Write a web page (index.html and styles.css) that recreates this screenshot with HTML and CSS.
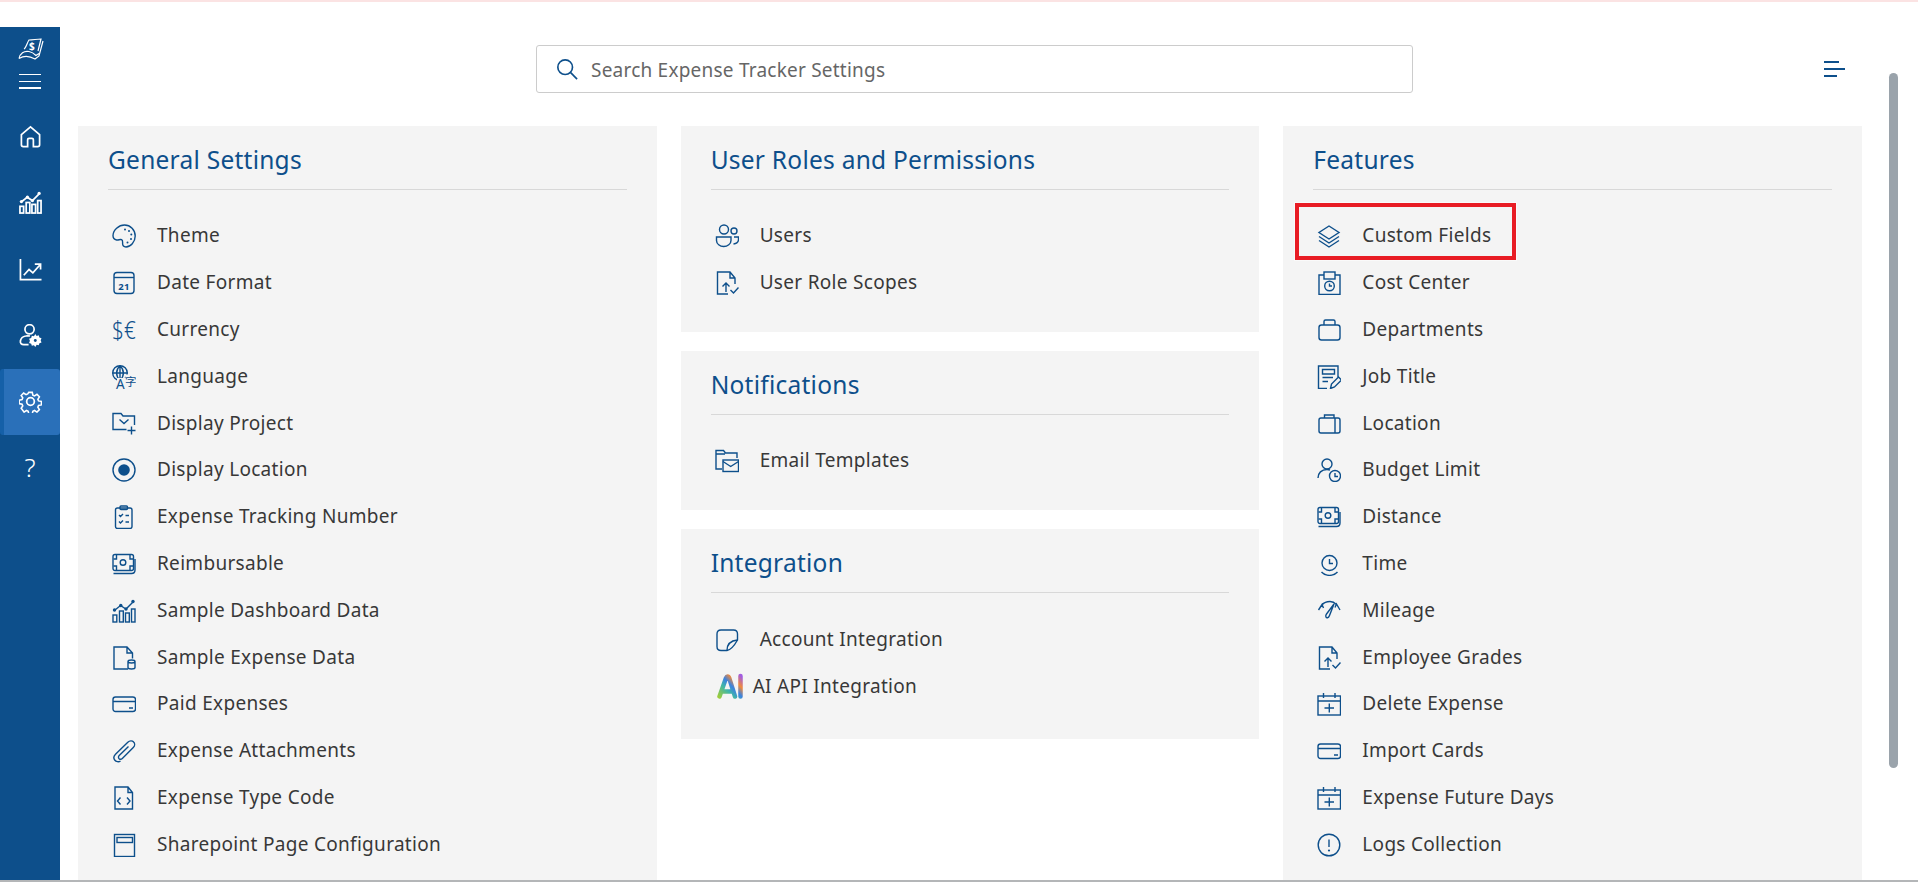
FILE: index.html
```html
<!DOCTYPE html>
<html lang="en">
<head>
<meta charset="utf-8">
<title>Expense Tracker Settings</title>
<link rel="stylesheet" href="styles.css">
</head>
<body>
<svg class="sprite" aria-hidden="true">
  <defs>
    <symbol id="i-palette" viewBox="0 0 24 24"><path d="M12.500 1C18.500 1 23.200 5.800 23.200 12S18.500 23 14 23c-2.400 0-3.400-1.500-3.400-3.400 0-1.600.4-3.100-1-3.900-1.500-.9-3 .7-5 .3C2.400 15.600 1 13.800 1 11.500 1 6 6.800 1 12.500 1z"/><g class="dot"><circle cx="13" cy="5.500" r="1"/><circle cx="17" cy="7" r="1"/><circle cx="19.300" cy="10.500" r="1"/><circle cx="19" cy="15" r="1"/><circle cx="15.500" cy="18.500" r="1"/></g></symbol>
    <symbol id="i-date" viewBox="0 0 24 24"><rect x="2" y="1.500" width="20" height="21" rx="3"/><path d="M2 6.500h20"/><text class="tx" x="12" y="18.500" font-size="9.500" font-weight="700" text-anchor="middle">21</text></symbol>
    <symbol id="i-currency" viewBox="0 0 24 24"><text class="tx thin" x="0" y="21" font-size="26" textLength="24" lengthAdjust="spacingAndGlyphs">$€</text></symbol>
    <symbol id="i-language" viewBox="0 0 24 24"><circle cx="8" cy="8" r="7.300"/><path d="M.7 8h14.600M8 .7v14.600M8 .7c-4.500 4-4.500 10.600 0 14.600M8 .7c4.500 4 4.500 10.600 0 14.600"/><rect class="mask" x="5" y="13" width="19" height="12"/><rect class="mask" x="13.500" y="9.500" width="11" height="5"/><text class="tx" x="4" y="24" font-size="13.500">A</text><text class="tx cjk" x="13" y="21" font-size="11.500">字</text></symbol>
    <symbol id="i-folder" viewBox="0 0 24 24"><path d="M14.500 17.500H1V1.500h8l2 2.500h11.500v9"/><path d="M7.500 7.500l4.500 4 4.500-4M19.500 14.500v8M15.500 18.500h8"/></symbol>
    <symbol id="i-radio" viewBox="0 0 24 24"><circle cx="12" cy="12" r="11"/><circle class="solid" cx="12" cy="12" r="5.800"/></symbol>
    <symbol id="i-clipboard" viewBox="0 0 24 24"><rect x="3.500" y="3" width="16.500" height="20.500" rx="2"/><rect x="8" y="1" width="7.500" height="3.500" rx="1"/><path d="M7 10l1.500 1.500L11 9M13.500 10.500H17M7 16.500l1.500 1.500 2.500-2.500M13.500 17H17"/></symbol>
    <symbol id="i-money" viewBox="0 0 24 24"><rect x="1" y="2.500" width="20.500" height="16" rx="2"/><circle cx="11" cy="10.500" r="2.800"/><path d="M1.500 21.500h18c2 0 3.500-1.500 3.500-3.500V7"/><path d="M1.500 7h3V3M18 3v4h3M1.500 14h3v4M18 18v-4h3"/></symbol>
    <symbol id="i-chart" viewBox="0 0 24 24"><rect class="bar" x="1" y="16" width="3.800" height="7"/><rect class="bar" x="7.500" y="12" width="3.800" height="11"/><rect class="bar" x="13.500" y="14" width="3.800" height="9"/><rect class="bar" x="19.500" y="10" width="3.500" height="13"/><path d="M3 11l5.500-4.500 5.500 3.500 6.500-6.500"/><g class="dot"><circle cx="2.500" cy="11" r="1.700"/><circle cx="8.800" cy="6.500" r="1.700"/><circle cx="14" cy="10" r="1.700"/><circle cx="21" cy="2.500" r="1.700"/></g></symbol>
    <symbol id="i-docdb" viewBox="0 0 24 24"><path d="M16 23H2V1h13l5.500 6v5.500M15 1v6h5.500"/><path d="M16 15.500v6c0 2 7 2 7 0v-6c0-2-7-2-7 0zM16 15.500c0 2 7 2 7 0"/></symbol>
    <symbol id="i-card" viewBox="0 0 24 24"><rect x="1" y="5" width="22.500" height="14.500" rx="2.500"/><path d="M1 9.500h22.500M17 16h4"/></symbol>
    <symbol id="i-clip" viewBox="0 0 24 24"><path d="M8.500 22c-1.800 1.300-4.500.8-5.800-1-1.300-1.800-.8-4.200.8-5.800L15.800 3.300c1.800-1.800 4.500-1.800 5.800-.3 1.500 1.500 1.300 4-.3 5.600L10.300 19.500c-.9.900-2.300 1-3.200.2-.9-.9-.8-2.400.1-3.300l9.300-9"/></symbol>
    <symbol id="i-doccode" viewBox="0 0 24 24"><path d="M3 23V1h13l4.500 5.500V23zM16 1v5.500h4.500"/><path d="M8.500 11.500L5.500 15l3 3.500M15 11.500l3 3.500-3 3.500"/></symbol>
    <symbol id="i-page" viewBox="0 0 24 24"><rect x="2.500" y="1.500" width="20" height="22"/><rect x="5" y="4.500" width="15.500" height="5"/></symbol>
    <symbol id="i-users" viewBox="0 0 24 24"><circle cx="9" cy="5.500" r="4.500"/><circle cx="19" cy="7" r="3"/><path d="M1.500 13h14.500v3.500c0 3.500-3.500 6-7.300 6s-7.200-2.500-7.200-6z"/><path d="M19 13h4.500v2.500c0 2.500-2 4-5 4.500"/></symbol>
    <symbol id="i-docup" viewBox="0 0 24 24"><path d="M13 23H2.500V1h12.500l5 6v6M15 1v6h5"/><path d="M11 21v-8.500M7.500 15.500l3.500-3.500 3.500 3.500M15.500 19l3 3 5-5.500"/></symbol>
    <symbol id="i-mailfolder" viewBox="0 0 24 24"><path d="M7 20H1V1.500h7.500l2 2.500H22v5M1 5h9"/><rect x="8" y="11" width="15.500" height="11.500"/><path d="M8 12.500l7.700 5 7.800-5"/></symbol>
    <symbol id="i-note" viewBox="0 0 24 24"><path d="M12 22.500H6c-2.500 0-4-1.500-4-4V6c0-2.500 1.500-4 4-4h12.500c2.500 0 4 1.500 4 4v6C18 20 15 22 12 22.500z"/><path d="M12 22.500c0-6 3-9.800 10.500-10.500"/></symbol>
    <symbol id="i-layers" viewBox="0 0 24 24"><path d="M12 2L2 8.500 12 15l10-6.500zM2 12.500L12 19l10-6.500M2 16.500L12 23l10-6.500"/></symbol>
    <symbol id="i-cost" viewBox="0 0 24 24"><path d="M7 4H2v19.500h21V4h-5"/><rect x="7" y="1" width="11" height="7"/><circle cx="12.500" cy="15" r="4.800"/><path d="M12.500 12.500V15h2.500"/></symbol>
    <symbol id="i-case" viewBox="0 0 24 24"><rect x="2" y="7" width="21" height="15" rx="2.500"/><path d="M7 7V3.500C7 2.500 7.500 2 8.500 2h8c1 0 1.500.5 1.500 1.500V7"/></symbol>
    <symbol id="i-job" viewBox="0 0 24 24"><path d="M10 23.500H1.500V1H21v11"/><path d="M5.500 4.500h12v4.500h-12zM5.500 12.500H16M5.500 16.500H11"/><path d="M13.500 23.500l1-4.500 7-7 3 3-7 7z"/></symbol>
    <symbol id="i-luggage" viewBox="0 0 24 24"><rect x="2" y="6" width="21" height="15" rx="2"/><path d="M7.500 6V3h9.500v3M18 6v15"/></symbol>
    <symbol id="i-budget" viewBox="0 0 24 24"><circle cx="10" cy="6" r="5"/><path d="M1 20c0-5 3.500-8.500 9-8.500 1 0 2 .1 3 .5"/><circle cx="18" cy="18" r="5.500"/><path d="M18 15v3.500h3"/></symbol>
    <symbol id="i-time" viewBox="0 0 24 24"><circle cx="12.500" cy="11" r="7.500"/><path d="M12.500 7v4.500H16M4.500 20c4 4.500 12 4.500 16 0"/></symbol>
    <symbol id="i-mileage" viewBox="0 0 24 24"><path d="M1.500 11L5 5.500l1.500 3.500M23 11l-3.500-6-1.500 3.500M5 6c2-2.500 5-3.500 8-3.500 2.500 0 4.500 1 6.500 3"/><path d="M17 5L9.500 15c-1.500 2-.5 4 1 3.800 1-.2 1.500-1 2-2.300z"/></symbol>
    <symbol id="i-calplus" viewBox="0 0 24 24"><rect x="1" y="4" width="22.500" height="19"/><path d="M1 9h22.500M6.500 1v5M18 1v5M12.300 11.500v9M7.500 16h9.500"/></symbol>
    <symbol id="i-info" viewBox="0 0 24 24"><circle cx="12" cy="12" r="10.800"/><path d="M12 6.500V14"/><circle class="solid" cx="12" cy="17.500" r="1.100"/></symbol>
    <symbol id="i-home" viewBox="0 0 24 24"><path d="M2.500 10L12 2l9.500 8v10.500c0 1.200-.8 2-2 2H15v-7c0-1-.6-1.500-1.500-1.500h-3C9.600 14 9 14.500 9 15.500v7H4.500c-1.200 0-2-.8-2-2z"/></symbol>
    <symbol id="i-trend" viewBox="0 0 24 24"><path d="M1.500 1v21.500h22M5 18l5.500-6 4 3.500L22 7M16.500 6.500H22.500V12"/></symbol>
    <symbol id="i-usergear" viewBox="0 0 24 24"><circle cx="11" cy="5.500" r="4.800"/><path d="M10 21.500H5C2.500 21.500 1 20 1.500 17.500 2 15 4 13 7 12.500c1.500-.3 3-.3 4.500 0"/><path class="solid" d="M17 10.500l1.400 1.900 2.200-.6.700 2.200 2.200.8-.9 2.200.9 2.200-2.200.8-.7 2.200-2.200-.6L17 24l-1.400-1.900-2.200.6-.7-2.200-2.200-.8.900-2.200-.9-2.200 2.200-.8.700-2.200 2.200.6z"/><circle class="hole" cx="17" cy="17.200" r="1.500"/></symbol>
    <symbol id="i-gear" viewBox="0 0 24 24"><path d="M10 1.500h4l.7 3.300 1.900.8 2.800-1.800 2.800 2.800-1.800 2.800.8 1.900 3.300.7v3.900l-3.300.7-.8 1.900 1.800 2.800-2.800 2.800-2.800-1.800-1.900.8-.7 3.300h-4l-.7-3.300-1.900-.8-2.800 1.800L1.300 19.800l1.800-2.800-.8-1.900L-1 14.400v-3.900l3.300-.7.800-1.900L1.300 5.100l2.800-2.800 2.800 1.800 1.900-.8z" transform="translate(1.100 1.100) scale(.91)"/><circle cx="12" cy="12" r="4"/></symbol>
    <symbol id="i-logo" viewBox="0 0 26 22"><path d="M1 20.500c1-5 5-8 10-7 3 .6 5 2 7 4l3-2M1 20.500c4-2.500 10-3 16 .5l4-3 4-15M6 11c2-1 3-6 5-9 4 0 8-1 12-1l-3 12"/><text class="tx" x="11" y="12" font-size="10" font-weight="700">$</text></symbol>
  </defs>
</svg>

<div class="topline"></div>
<div class="app">
  <aside class="sidebar">
    <div class="side-head">
      <svg class="logo"><use href="#i-logo"/></svg>
      <div class="burger"><span></span><span></span><span></span></div>
    </div>
    <a class="nav"><svg class="nav-ic"><use href="#i-home"/></svg></a>
    <a class="nav"><svg class="nav-ic"><use href="#i-chart"/></svg></a>
    <a class="nav"><svg class="nav-ic"><use href="#i-trend"/></svg></a>
    <a class="nav"><svg class="nav-ic"><use href="#i-usergear"/></svg></a>
    <a class="nav active"><svg class="nav-ic"><use href="#i-gear"/></svg></a>
    <a class="nav help">?</a>
  </aside>

  <main class="main">
    <div class="toolbar">
      <div class="search">
        <svg class="search-ic" viewBox="0 0 24 24"><circle cx="10" cy="10" r="8"/><path d="M16 16l7 7"/></svg>
        <span class="search-text">Search Expense Tracker Settings</span>
      </div>
      <div class="menu-lines"><span class="l1"></span><span class="l2"></span><span class="l3"></span></div>
    </div>

    <div class="grid">
      <section class="panel panel-tall">
        <h2>General Settings</h2>
        <ul>
          <li><svg class="ic"><use href="#i-palette"/></svg>Theme</li>
          <li><svg class="ic"><use href="#i-date"/></svg>Date Format</li>
          <li><svg class="ic"><use href="#i-currency"/></svg>Currency</li>
          <li><svg class="ic"><use href="#i-language"/></svg>Language</li>
          <li><svg class="ic"><use href="#i-folder"/></svg>Display Project</li>
          <li><svg class="ic"><use href="#i-radio"/></svg>Display Location</li>
          <li><svg class="ic"><use href="#i-clipboard"/></svg>Expense Tracking Number</li>
          <li><svg class="ic"><use href="#i-money"/></svg>Reimbursable</li>
          <li><svg class="ic"><use href="#i-chart"/></svg>Sample Dashboard Data</li>
          <li><svg class="ic"><use href="#i-docdb"/></svg>Sample Expense Data</li>
          <li><svg class="ic"><use href="#i-card"/></svg>Paid Expenses</li>
          <li><svg class="ic"><use href="#i-clip"/></svg>Expense Attachments</li>
          <li><svg class="ic"><use href="#i-doccode"/></svg>Expense Type Code</li>
          <li><svg class="ic"><use href="#i-page"/></svg>Sharepoint Page Configuration</li>
        </ul>
      </section>

      <div class="stack">
        <section class="panel">
          <h2>User Roles and Permissions</h2>
          <ul>
            <li><svg class="ic"><use href="#i-users"/></svg>Users</li>
            <li><svg class="ic"><use href="#i-docup"/></svg>User Role Scopes</li>
          </ul>
        </section>
        <section class="panel">
          <h2>Notifications</h2>
          <ul>
            <li><svg class="ic"><use href="#i-mailfolder"/></svg>Email Templates</li>
          </ul>
        </section>
        <section class="panel panel-roomy">
          <h2>Integration</h2>
          <ul>
            <li><svg class="ic"><use href="#i-note"/></svg>Account Integration</li>
            <li class="ai"><svg class="ai-ic" viewBox="0 0 26 26">
              <defs><linearGradient id="ai-grad" gradientUnits="userSpaceOnUse" x1="2" y1="24" x2="24" y2="3"><stop offset="0" stop-color="#9ccc3c"/><stop offset=".35" stop-color="#3fb6a8"/><stop offset=".55" stop-color="#3b82e0"/><stop offset=".75" stop-color="#f08a3c"/><stop offset="1" stop-color="#a25ce0"/></linearGradient></defs>
              <path class="ai-stroke" d="M2.500 23.500L9 5c.8-2 2.500-2 3.200 0L18 23.500M6 18.500h10.500M23.500 3v20.500"/>
            </svg>AI API Integration</li>
          </ul>
        </section>
      </div>

      <section class="panel panel-tall">
        <h2>Features</h2>
        <ul>
          <li class="marked"><svg class="ic"><use href="#i-layers"/></svg>Custom Fields<span class="callout"></span></li>
          <li><svg class="ic"><use href="#i-cost"/></svg>Cost Center</li>
          <li><svg class="ic"><use href="#i-case"/></svg>Departments</li>
          <li><svg class="ic"><use href="#i-job"/></svg>Job Title</li>
          <li><svg class="ic"><use href="#i-luggage"/></svg>Location</li>
          <li><svg class="ic"><use href="#i-budget"/></svg>Budget Limit</li>
          <li><svg class="ic"><use href="#i-money"/></svg>Distance</li>
          <li><svg class="ic"><use href="#i-time"/></svg>Time</li>
          <li><svg class="ic"><use href="#i-mileage"/></svg>Mileage</li>
          <li><svg class="ic"><use href="#i-docup"/></svg>Employee Grades</li>
          <li><svg class="ic"><use href="#i-calplus"/></svg>Delete Expense</li>
          <li><svg class="ic"><use href="#i-card"/></svg>Import Cards</li>
          <li><svg class="ic"><use href="#i-calplus"/></svg>Expense Future Days</li>
          <li><svg class="ic"><use href="#i-info"/></svg>Logs Collection</li>
        </ul>
      </section>
    </div>
  </main>

  <div class="scrolltrack"><div class="thumb"></div></div>
</div>
<div class="bottomline"></div>
</body>
</html>
```

FILE: styles.css
```css
* { box-sizing: border-box; }

html, body { height: 100%; }

body {
  margin: 0;
  height: 882px;
  overflow: hidden;
  display: flex;
  flex-direction: column;
  background: #fff;
  font-family: "Noto Sans", "Open Sans", sans-serif;
  color: #333;
}

.sprite { width: 0; height: 0; display: block; flex: none; }

.topline { flex: none; height: 2px; margin-bottom: 25px; background: #fbe3e3; }

.app { flex: 1; display: flex; min-height: 0; }

.bottomline { flex: none; height: 2px; background: #b4b6b8; }

/* sidebar */
.sidebar { flex: none; width: 60px; background: #0d4f8b; color: #fff; }

.side-head { height: 76.500px; display: flex; flex-direction: column; align-items: center; padding-top: 11px; }

.logo { width: 26px; height: 22px; display: block; fill: none; stroke: #fff; stroke-width: 1.200; margin-left: 1px; }

.burger { width: 22px; margin-top: 14px; display: flex; flex-direction: column; gap: 5.500px; }
.burger span { height: 1.200px; background: #fff; }

.nav { display: flex; height: 66.300px; align-items: center; justify-content: center; }
.nav.active { background: #2a70b9; border-left: 4px solid #1560a8; border-radius: 3px; padding-right: 4px; }
.nav-ic { width: 23px; height: 23px; fill: none; stroke: #fff; stroke-width: 1.800; color: #fff; }
.help { font-size: 26px; font-weight: 300; padding-bottom: 3px; }

/* main */
.main { flex: 1; min-width: 0; padding: 0 0 0 18px; display: flex; flex-direction: column; }

.toolbar { flex: none; height: 99px; padding-top: 18px; display: flex; align-items: flex-start; }

.search {
  width: 877px;
  height: 48px;
  margin-left: 458px;
  display: flex;
  align-items: center;
  padding-left: 19px;
  gap: 13px;
  border: 1px solid #ccc;
  border-radius: 3px;
}
.search-ic { width: 22px; height: 22px; fill: none; stroke: #0d4f8b; stroke-width: 1.800; }
.search-text { font-size: 19px; letter-spacing: .22px; color: #666; padding-top: 1px; }

.menu-lines { margin: 16px 0 0 411px; display: flex; flex-direction: column; gap: 5.500px; }
.menu-lines span { display: block; height: 1.500px; background: #0d4f8b; }
.menu-lines .l1 { width: 15px; }
.menu-lines .l2 { width: 21px; }
.menu-lines .l3 { width: 13px; }

.grid { flex: 1; min-height: 0; display: grid; grid-template-columns: repeat(3, 1fr); gap: 24px; }

.stack { display: flex; flex-direction: column; gap: 19.500px; }

.panel { background: #f4f4f4; padding: 0 30px 26px; }
.panel-tall { padding-bottom: 0; }
.panel-roomy { padding-bottom: 30px; }

.panel h2 {
  margin: 0;
  height: 64px;
  padding-top: 16px;
  font-size: 24.500px;
  letter-spacing: .25px;
  line-height: 36px;
  font-weight: 400;
  color: #0d4f8b;
  border-bottom: 1px solid #d8d8d8;
}

.panel ul { list-style: none; margin: 0; padding: 22px 0 0; }

.panel li {
  height: 46.800px;
  display: flex;
  align-items: center;
  padding-left: 4px;
  gap: 21px;
  font-size: 19px;
  letter-spacing: .3px;
  color: #383838;
  position: relative;
}

.ic { flex: none; width: 24px; height: 24px; fill: none; stroke: #0d4f8b; stroke-width: 1.400; margin-top: 2px; color: #0d4f8b; }

.dot, .solid { fill: currentColor; stroke: none; }
.hole { fill: #0d4f8b; stroke: none; }
.mask { fill: #f4f4f4; stroke: none; }
.tx { fill: currentColor; stroke: none; font-family: "Noto Sans", sans-serif; }
.tx.thin { font-weight: 300; }
.tx.cjk { font-family: "Noto Sans CJK SC", sans-serif; }

.panel li.ai { padding-left: 6px; gap: 10px; }
.ai-ic { flex: none; width: 26px; height: 26px; fill: none; stroke: url(#ai-grad); }
.ai-stroke { stroke-width: 4.500; stroke-linecap: round; stroke-linejoin: round; }

.callout {
  position: absolute;
  left: -18px;
  top: -9px;
  width: 221px;
  height: 57px;
  border: 4.500px solid #e81c24;
  outline: 1px solid rgba(255,255,255,.5);
}

.scrolltrack { flex: none; width: 56px; padding: 46px 20px 0 27px; }
.thumb { height: 695px; background: #9aa3ab; border-radius: 5px; }
```
